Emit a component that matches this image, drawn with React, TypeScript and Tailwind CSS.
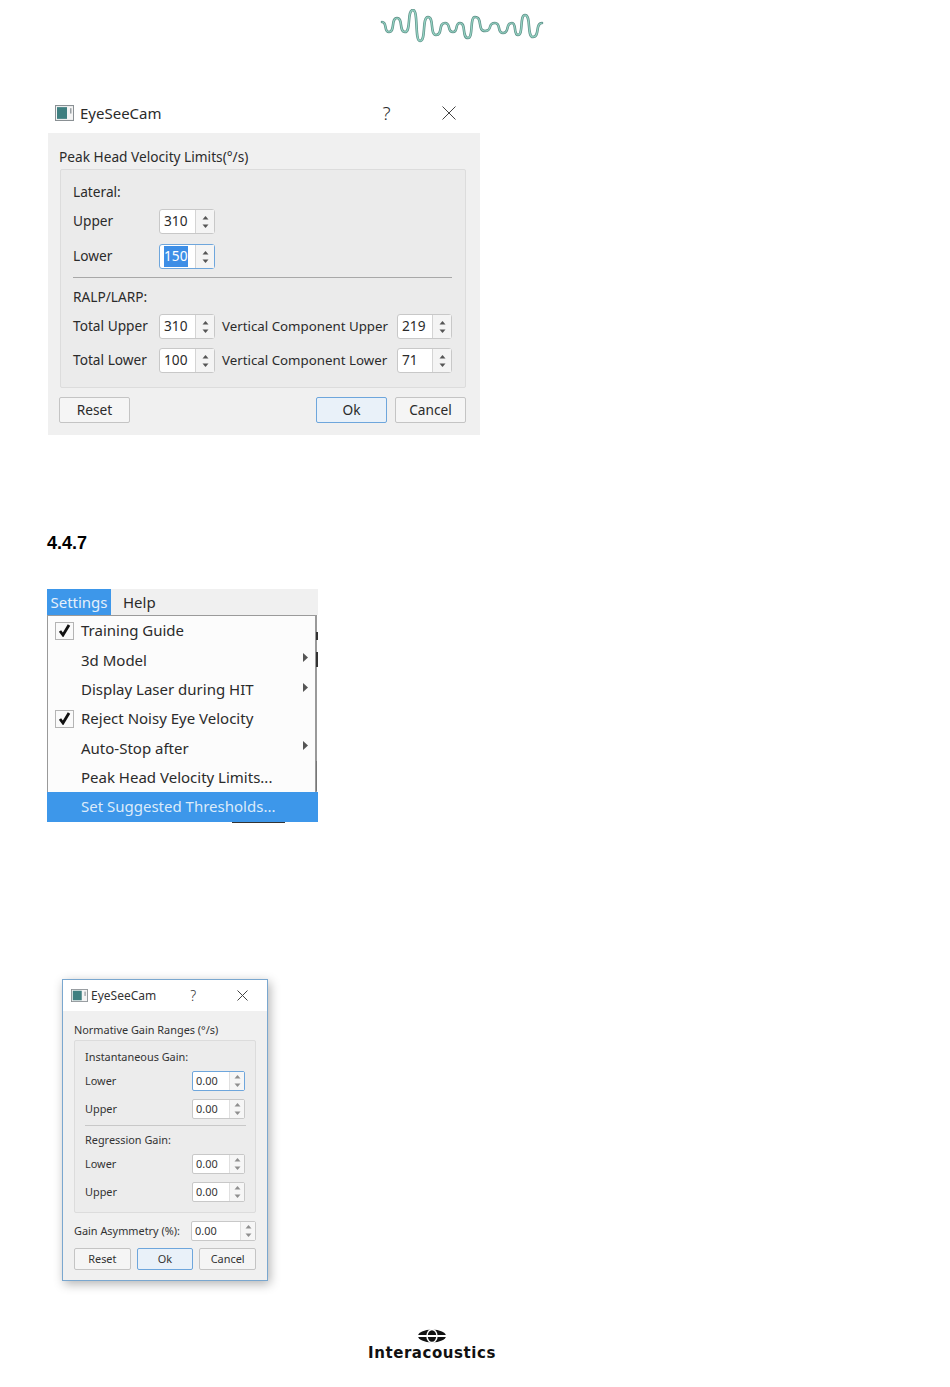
const wavePoints = [
  [2, 13], [9, 23], [17, 9], [25, 23], [33, 1], [40, 32], [48, 8], [56, 26], [65, 14], [73, 23],
  [80, 14], [88, 29], [95, 8], [105, 22], [115, 14], [123, 24], [132, 14], [138, 26], [145, 6], [153, 28], [162, 14],
]

function wavePath() {
  let d = `M${wavePoints[0][0]} ${wavePoints[0][1]}`
  for (let i = 1; i < wavePoints.length; i++) {
    const [x0, y0] = wavePoints[i - 1]
    const [x1, y1] = wavePoints[i]
    const h = (x1 - x0) * 0.8
    d += ` C${x0 + h} ${y0} ${x1 - h} ${y1} ${x1} ${y1}`
  }
  return d
}

function WaveLogo() {
  const d = wavePath()
  return (
    <svg width="164" height="34" viewBox="0 0 164 34" fill="none" strokeLinecap="round">
      <path d={d} stroke="#5f8f88" strokeWidth="2.6" />
      <path d={d} stroke="#93d3c2" strokeWidth="1.2" />
    </svg>
  )
}

function AppIcon({ small }: { small?: boolean }) {
  return (
    <svg width={small ? 17 : 19} height={small ? 13 : 16} viewBox="0 0 19 15" preserveAspectRatio="none">
      <rect x="0.5" y="0.5" width="18" height="14" fill="#f4f4f4" stroke="#8a9094" />
      <rect x="2" y="2" width="10" height="11" fill="#3f7f80" />
      <rect x="15" y="3" width="1.5" height="5" fill="#9aa0a4" />
    </svg>
  )
}

function Arrows({ small }: { small?: boolean }) {
  const fill = small ? "#8f8f8f" : "#555555"
  return (
    <svg width="7" height="14" viewBox="0 0 7 14">
      <path d="M3.5 1 L6.5 4.5 L0.5 4.5 Z" fill={fill} />
      <path d="M3.5 13 L6.5 9.5 L0.5 9.5 Z" fill={fill} />
    </svg>
  )
}

function Spin({ value, narrow, selected }: { value: string; narrow?: boolean; selected?: boolean }) {
  return (
    <div className={`flex h-[25px] rounded-[3px] border bg-white ${narrow ? "w-[55px]" : "w-[56px]"} ${selected ? "border-[#6ea6dc]" : "border-[#c8c8c8]"}`}>
      <div className="flex flex-1 items-center pl-[4px]">
        <span className={selected ? "bg-[#3d8ee6] text-white" : ""}>{value}</span>
      </div>
      <div className="flex w-[19px] items-center justify-center border-l border-[#d4d4d4] bg-[#f4f4f4]">
        <Arrows />
      </div>
    </div>
  )
}

function SmallSpin({ value, focused, wide }: { value: string; focused?: boolean; wide?: boolean }) {
  return (
    <div className={`flex h-[20px] rounded-[2px] border bg-white ${wide ? "w-[65px]" : "w-[53px]"} ${focused ? "border-[#6ea6dc]" : "border-[#c8c8c8]"}`}>
      <div className="flex flex-1 items-center pl-[3px]">{value}</div>
      <div className="flex w-[15px] items-center justify-center border-l border-[#e0e0e0] bg-[#f6f6f6]">
        <Arrows small />
      </div>
    </div>
  )
}

function Btn({ label, primary }: { label: string; primary?: boolean }) {
  return (
    <div className={`flex h-[26px] w-[71px] items-center justify-center rounded-[2px] border ${primary ? "border-[#6ea6dc] bg-[#e9f1f9]" : "border-[#c4c4c4] bg-[#f5f5f5]"}`}>
      {label}
    </div>
  )
}

function SmallBtn({ label, primary }: { label: string; primary?: boolean }) {
  return (
    <div className={`flex h-[22px] w-[57px] items-center justify-center rounded-[2px] border ${primary ? "border-[#6ea6dc] bg-[#e9f1f9]" : "border-[#c4c4c4] bg-[#f5f5f5]"}`}>
      {label}
    </div>
  )
}

function VelocityDialog() {
  return (
    <div className="w-[432px] text-[13.7px] text-[#2b2b2b]">
      <div className="flex h-[36px] items-center pb-[4px] pl-[7px]">
        <AppIcon />
        <span className="ml-[6px] text-[15px]">EyeSeeCam</span>
        <span className="ml-[221px] text-[19px] font-light">?</span>
        <svg className="ml-[51px]" width="14" height="14" viewBox="0 0 14 14" stroke="#444444" strokeWidth="1">
          <path d="M0.5 0.5 L13.5 13.5 M13.5 0.5 L0.5 13.5" />
        </svg>
      </div>
      <div className="h-[302px] bg-[#f0f0f0] px-[12px] pt-[13px]">
        <div className="-ml-px h-[23px] leading-[22px]">Peak Head Velocity Limits(°/s)</div>
        <div className="h-[219px] w-[406px] rounded-[2px] border border-[#dcdcdc] bg-[#ebebeb] pl-[12px] pr-[13px] pt-[11px]">
          <div className="h-[22px] leading-[22px]">Lateral:</div>
          <div className="mt-[6px] flex h-[25px] items-center">
            <span className="w-[86px]">Upper</span>
            <Spin value="310" />
          </div>
          <div className="mt-[10px] flex h-[25px] items-center">
            <span className="w-[86px]">Lower</span>
            <Spin value="150" selected />
          </div>
          <div className="mt-[8px] border-t border-[#a8a8a8]" />
          <div className="mt-[8px] h-[22px] leading-[22px]">RALP/LARP:</div>
          <div className="mt-[6px] flex h-[25px] items-center">
            <span className="w-[86px]">Total Upper</span>
            <Spin value="310" />
            <span className="ml-[7px] w-[175px] text-[13.3px]">Vertical Component Upper</span>
            <Spin value="219" narrow />
          </div>
          <div className="mt-[9px] flex h-[25px] items-center">
            <span className="w-[86px]">Total Lower</span>
            <Spin value="100" />
            <span className="ml-[7px] w-[175px] text-[13.3px]">Vertical Component Lower</span>
            <Spin value="71" narrow />
          </div>
        </div>
        <div className="-ml-px mt-[9px] flex w-[407px] gap-[8px]">
          <Btn label="Reset" />
          <div className="flex-1" />
          <Btn label="Ok" primary />
          <Btn label="Cancel" />
        </div>
      </div>
    </div>
  )
}

function CheckBox() {
  return (
    <div className="flex h-[18px] w-[19px] items-center justify-center border border-[#b4b4b4] bg-[#fafafa]">
      <svg width="13" height="13" viewBox="0 0 13 13" fill="none" stroke="#111111" strokeWidth="2.8">
        <path d="M2 7 L5 11 L11 1" />
      </svg>
    </div>
  )
}

const menuItems = [
  { label: "Training Guide", checked: true },
  { label: "3d Model", sub: true },
  { label: "Display Laser during HIT", sub: true },
  { label: "Reject Noisy Eye Velocity", checked: true },
  { label: "Auto-Stop after", sub: true },
  { label: "Peak Head Velocity Limits..." },
]

function SettingsMenu() {
  return (
    <div className="relative w-[271px] text-[15px] text-[#2b2b2b]">
      <div className="flex h-[26px] items-center bg-[#f0f0f0]">
        <div className="flex h-full w-[64px] items-center justify-center bg-[#3d97ea] text-[#e4f0fb]">Settings</div>
        <span className="ml-[12px]">Help</span>
      </div>
      <div className="h-[177px] w-[270px] border-l border-r-2 border-t border-[#9a9a9a] bg-[#fcfcfc]">
        {menuItems.map((item) => (
          <div key={item.label} className="flex h-[29.3px] items-center pl-[7px]">
            <div className="w-[26px]">{item.checked && <CheckBox />}</div>
            <span>{item.label}</span>
            {item.sub && (
              <svg className="absolute ml-[248px] -mt-[4px]" width="5" height="9" viewBox="0 0 5 9">
                <path d="M0 0 L5 4.5 L0 9 Z" fill="#555555" />
              </svg>
            )}
          </div>
        ))}
      </div>
      <div className="flex h-[30px] w-[271px] items-center bg-[#3d97ea] pb-[2px] pl-[34px] text-[#dcebfa]">Set Suggested Thresholds...</div>
      {/* bits of the window behind the menu */}
      <div className="absolute left-[269px] top-[43px] h-[8px] w-[2px] bg-[#333333]" />
      <div className="absolute left-[269px] top-[63px] h-[15px] w-[2px] bg-[#333333]" />
      <div className="absolute left-[269px] top-[172px] h-[30px] w-[1px] bg-[#777777]" />
      <div className="absolute left-[185px] top-[233px] h-[1px] w-[53px] bg-[#333333]" />
    </div>
  )
}

function SmallRow({ label, focused }: { label: string; focused?: boolean }) {
  return (
    <div className="flex h-[20px] items-center">
      <span className="w-[107px]">{label}</span>
      <SmallSpin value="0.00" focused={focused} />
    </div>
  )
}

function GainDialog() {
  return (
    <div className="ml-[15px] h-[302px] w-[206px] border border-[#7aa7cf] bg-[#f0f0f0] text-[10.9px] text-[#333333] shadow-[2px_3px_10px_rgba(0,0,0,0.3)]">
      <div className="flex h-[31px] items-center bg-white pl-[8px]">
        <AppIcon small />
        <span className="ml-[3px] text-[12px]">EyeSeeCam</span>
        <span className="ml-[34px] text-[14px] font-light">?</span>
        <svg className="ml-[41px]" width="11" height="11" viewBox="0 0 11 11" stroke="#444444" strokeWidth="1">
          <path d="M0.5 0.5 L10.5 10.5 M10.5 0.5 L0.5 10.5" />
        </svg>
      </div>
      <div className="px-[11px] pt-[10px]">
        <div className="h-[18px] leading-[18px]">Normative Gain Ranges (°/s)</div>
        <div className="mt-[1px] h-[173px] w-[182px] rounded-[2px] border border-[#dcdcdc] bg-[#ececec] pl-[10px] pr-[9px] pt-[8px]">
          <div className="h-[16px] leading-[16px]">Instantaneous Gain:</div>
          <div className="mt-[6px] flex flex-col gap-[8px]">
            <SmallRow label="Lower" focused />
            <SmallRow label="Upper" />
          </div>
          <div className="mt-[6px] border-t border-[#c8c8c8]" />
          <div className="mt-[6px] h-[16px] leading-[16px]">Regression Gain:</div>
          <div className="mt-[6px] flex flex-col gap-[8px]">
            <SmallRow label="Lower" />
            <SmallRow label="Upper" />
          </div>
        </div>
        <div className="mt-[8px] flex h-[20px] items-center justify-between">
          <span>Gain Asymmetry (%):</span>
          <SmallSpin value="0.00" wide />
        </div>
        <div className="mt-[7px] flex gap-[6px]">
          <SmallBtn label="Reset" />
          <SmallBtn label="Ok" primary />
          <SmallBtn label="Cancel" />
        </div>
      </div>
    </div>
  )
}

function InteracousticsLogo() {
  return (
    <div className="flex flex-col items-center">
      <svg width="28" height="14" viewBox="0 0 28 14">
        <ellipse cx="14" cy="7" rx="14" ry="6.5" fill="#111111" />
        <rect x="0" y="6" width="28" height="2" fill="#ffffff" />
        <ellipse cx="14" cy="7" rx="5" ry="6.5" fill="none" stroke="#ffffff" strokeWidth="1.4" />
      </svg>
      <span className="mt-[1px] font-['DejaVu_Sans',sans-serif] text-[15px] font-bold leading-[18px] tracking-[0.55px] text-[#111111]">Interacoustics</span>
    </div>
  )
}

export default function App() {
  return (
    <div className="flex h-[1387px] w-[950px] flex-col bg-white pl-[47px] font-['Noto_Sans',sans-serif]">
      <div className="ml-[333px] mt-[9px]">
        <WaveLogo />
      </div>
      <div className="ml-[1px] mt-[54px]">
        <VelocityDialog />
      </div>
      <div className="mt-[98px] h-[20px] font-['Liberation_Sans',sans-serif] text-[18px] font-bold leading-[20px] text-black">4.4.7</div>
      <div className="mt-[36px]">
        <SettingsMenu />
      </div>
      <div className="mt-[157px]">
        <GainDialog />
      </div>
      <div className="ml-[321px] mt-[48px] w-[128px]">
        <InteracousticsLogo />
      </div>
    </div>
  )
}
